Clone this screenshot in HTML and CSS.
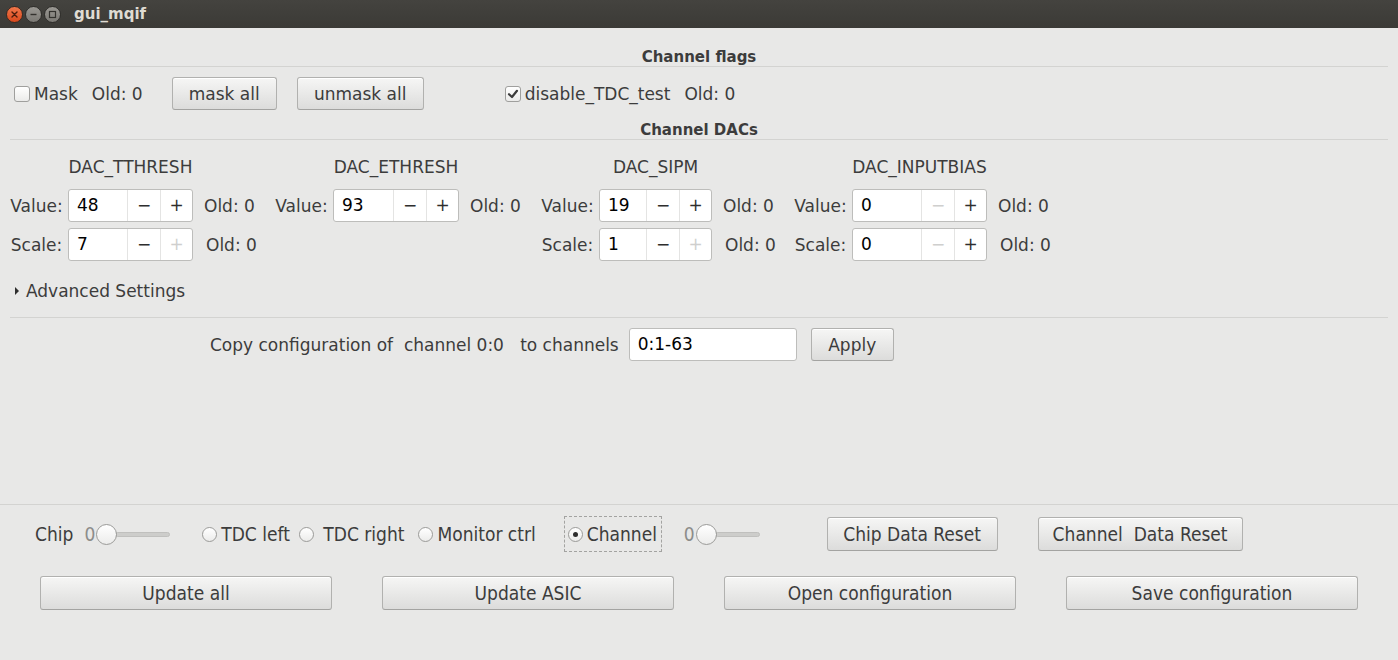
FILE: index.html
```html
<!DOCTYPE html>
<html>
<head>
<meta charset="utf-8">
<title>gui_mqif</title>
<link rel="stylesheet" href="styles.css">
</head>
<body>
<div class="titlebar">
  <div class="wbtns">
    <span class="wb close"><svg width="9" height="9" viewBox="0 0 9 9"><path d="M2 2L7 7M7 2L2 7" stroke="#4a1c0c" stroke-width="1.4" stroke-linecap="round"/></svg></span>
    <span class="wb"><svg width="9" height="9" viewBox="0 0 9 9"><path d="M1.5 4.5H7.5" stroke="#33322e" stroke-width="1.4"/></svg></span>
    <span class="wb"><svg width="9" height="9" viewBox="0 0 9 9"><rect x="1.5" y="1.5" width="6" height="6" fill="none" stroke="#33322e" stroke-width="1.2"/></svg></span>
  </div>
  <span class="wtitle">gui_mqif</span>
</div>

<div class="top">
  <div class="gtitle">Channel flags</div>
  <div class="flags">
    <span class="check"></span><span class="clabel">Mask</span><span class="old mask-old">Old: 0</span>
    <button class="btn b-mask">mask all</button>
    <button class="btn b-unmask">unmask all</button>
    <span class="check on"><svg width="14" height="14" viewBox="0 0 14 14"><path d="M3 7.2L6 10L11 3.8" fill="none" stroke="#3c3c3c" stroke-width="2.2" stroke-linecap="round" stroke-linejoin="round"/></svg></span><span class="clabel">disable_TDC_test</span><span class="old tdc-old">Old: 0</span>
  </div>
  <div class="gtitle">Channel DACs</div>

  <div class="dacs">
    <div class="dac c1">
      <div class="dhead">DAC_TTHRESH</div>
      <div class="dlabel">Value:</div>
      <div class="spin"><span class="sval">48</span><span class="sb">−</span><span class="sb">+</span></div>
      <div class="dold">Old: 0</div>
      <div class="dlabel">Scale:</div>
      <div class="spin"><span class="sval">7</span><span class="sb">−</span><span class="sb dis">+</span></div>
      <div class="dold s">Old: 0</div>
    </div>
    <div class="dac c2">
      <div class="dhead">DAC_ETHRESH</div>
      <div class="dlabel">Value:</div>
      <div class="spin"><span class="sval">93</span><span class="sb">−</span><span class="sb">+</span></div>
      <div class="dold">Old: 0</div>
    </div>
    <div class="dac c3">
      <div class="dhead">DAC_SIPM</div>
      <div class="dlabel">Value:</div>
      <div class="spin"><span class="sval">19</span><span class="sb">−</span><span class="sb">+</span></div>
      <div class="dold">Old: 0</div>
      <div class="dlabel">Scale:</div>
      <div class="spin"><span class="sval">1</span><span class="sb">−</span><span class="sb dis">+</span></div>
      <div class="dold s">Old: 0</div>
    </div>
    <div class="dac c4">
      <div class="dhead">DAC_INPUTBIAS</div>
      <div class="dlabel">Value:</div>
      <div class="spin"><span class="sval">0</span><span class="sb dis">−</span><span class="sb">+</span></div>
      <div class="dold">Old: 0</div>
      <div class="dlabel">Scale:</div>
      <div class="spin"><span class="sval">0</span><span class="sb dis">−</span><span class="sb">+</span></div>
      <div class="dold s">Old: 0</div>
    </div>
  </div>

  <div class="adv"><span class="tri"></span>Advanced Settings</div>
  <div class="sep"></div>

  <div class="copyrow">
    <span class="copylbl">Copy configuration of  channel 0:0   to channels</span>
    <span class="entry">0:1-63</span>
    <button class="btn b-apply">Apply</button>
  </div>
</div>

<div class="bottom">
  <div class="ctrlrow">
    <span class="chip">Chip</span>
    <span class="slider s1"><span class="sv">0</span><span class="knob"></span><span class="track"></span></span>
    <span class="radio r1"></span><span class="rlabel">TDC left</span>
    <span class="radio r2"></span><span class="rlabel"> TDC right</span>
    <span class="radio r3"></span><span class="rlabel">Monitor ctrl</span>
    <span class="focus"><span class="radio on"></span><span class="rlabel">Channel</span></span>
    <span class="slider s2"><span class="sv">0</span><span class="knob"></span><span class="track"></span></span>
    <button class="btn b-chipreset">Chip Data Reset</button>
    <button class="btn b-chreset">Channel  Data Reset</button>
  </div>
  <div class="actions">
    <button class="btn big">Update all</button>
    <button class="btn big">Update ASIC</button>
    <button class="btn big">Open configuration</button>
    <button class="btn big">Save configuration</button>
  </div>
</div>
</body>
</html>
```

FILE: styles.css
```css
* { box-sizing: border-box; }
html, body { margin: 0; padding: 0; }
body {
  width: 1398px;
  height: 660px;
  overflow: hidden;
  background: #e8e8e7;
  font-family: "DejaVu Sans", "Noto Sans", sans-serif;
  font-size: 17px;
  color: #3c3c3c;
}

/* title bar */
.titlebar {
  height: 28px;
  background: linear-gradient(#44433f, #3b3a36);
  display: flex;
  align-items: center;
  padding-left: 6px;
}
.wbtns { display: flex; gap: 2px; }
.wb {
  width: 17px;
  height: 17px;
  border-radius: 50%;
  display: inline-flex;
  align-items: center;
  justify-content: center;
  background: linear-gradient(#9a9893, #7b7974);
  border: 1px solid #2f2e2b;
}
.wb.close { background: linear-gradient(#f2774a, #d8481c); border-color: #3a2a22; }
.wtitle {
  margin-left: 13px;
  font-weight: bold;
  font-size: 15px;
  color: #dfdbd2;
}

/* top area */
.top { height: 476px; padding: 19px 10px 0; }
.gtitle {
  height: 20px;
  line-height: 19px;
  padding-top: 1px;
  text-align: center;
  font-weight: bold;
  font-size: 15px;
  border-bottom: 1px solid #d3d3d1;
}

.flags {
  height: 53px;
  padding: 10px 0;
  display: flex;
  align-items: center;
}
.flags > * { flex: none; }
.check {
  width: 16px;
  height: 16px;
  border: 1px solid #9f9f9d;
  border-radius: 3px;
  background: linear-gradient(#ffffff, #ebebea);
  display: inline-flex;
  align-items: center;
  justify-content: center;
  margin-left: 4px;
}
.check.on { margin-left: 81px; }
.clabel { margin-left: 4px; }
.mask-old { margin-left: 14px; }
.tdc-old { margin-left: 14px; }

.btn {
  height: 33px;
  padding: 0;
  font: inherit;
  color: #3c3c3c;
  border: 1px solid #b1b1af;
  border-bottom-color: #a3a3a1;
  border-radius: 3px;
  background: linear-gradient(#f6f6f5, #dcdcdb);
  box-shadow: inset 0 1px 0 #ffffff;
  white-space: pre;
}
.b-mask { width: 105px; margin-left: 29px; }
.b-unmask { width: 127px; margin-left: 20px; }

/* dacs */
.dacs {
  display: flex;
  gap: 20px;
  padding-top: 15px;
}
.dac {
  display: grid;
  grid-template-rows: 28px 33px 33px;
  row-gap: 6px;
  align-items: center;
}
.dac.c1 { grid-template-columns: 58px 125px 62px; }
.dac.c2 { grid-template-columns: 58px 126px 62px; }
.dac.c3 { grid-template-columns: 58px 113px 62px; }
.dac.c4 { grid-template-columns: 58px 135px 62px; }
.dhead {
  grid-column: 2;
  height: 24px;
  padding-top: 2px;
  align-self: start;
  text-align: center;
  white-space: nowrap;
  margin: 0 -10px;
}
.dlabel { grid-column: 1; padding-right: 5px; text-align: center; }
.spin { grid-column: 2; }
.dold { grid-column: 3; padding-left: 11px; white-space: nowrap; }
.dold.s { padding-left: 13px; }

.spin {
  height: 33px;
  display: flex;
  background: #ffffff;
  border: 1px solid #bdbdbb;
  border-radius: 3px;
}
.sval {
  flex: 1;
  padding-left: 8px;
  color: #000000;
  line-height: 31px;
}
.sb {
  width: 33px;
  flex: none;
  text-align: center;
  line-height: 31px;
  border-left: 1px solid #e4e4e3;
  color: #2e2e2e;
}
.sb:last-child { width: 32px; }
.sb.dis { color: #cfcfce; }

.adv {
  height: 30px;
  margin-top: 15px;
  display: flex;
  align-items: center;
  padding-left: 5px;
}
.tri {
  width: 0;
  height: 0;
  border-top: 4px solid transparent;
  border-bottom: 4px solid transparent;
  border-left: 4px solid #2e2e2e;
  margin-right: 7px;
}
.sep { height: 1px; background: #d3d3d1; margin-top: 11px; }

.copyrow {
  margin-top: 10px;
  height: 33px;
  display: flex;
  align-items: center;
  padding-left: 200px;
}
.copylbl { white-space: pre; }
.entry {
  width: 168px;
  height: 33px;
  margin-left: 10px;
  background: #ffffff;
  border: 1px solid #bdbdbb;
  border-radius: 3px;
  padding-left: 8px;
  line-height: 31px;
  color: #000;
}
.b-apply { width: 83px; height: 33px; margin-left: 14px; }

/* bottom */
.bottom {
  border-top: 1px solid #d3d3d1;
  font-family: "DejaVu Sans Condensed", "DejaVu Sans", sans-serif;
  font-size: 19px;
}
.ctrlrow {
  height: 46px;
  padding-top: 12px;
  padding-left: 35px;
  display: flex;
  align-items: center;
}
.ctrlrow > * { flex: none; }
.ctrlrow .btn { height: 34px; }
.slider { display: inline-flex; align-items: center; }
.sv { color: #8d8d8b; margin-right: 1px; }
.knob {
  width: 21px;
  height: 21px;
  border-radius: 50%;
  border: 1px solid #9b9b99;
  background: linear-gradient(#ffffff, #ececeb);
  position: relative;
  z-index: 1;
}
.track {
  width: 55px;
  height: 5px;
  margin-left: -2px;
  border-radius: 3px;
  background: #cdcdcb;
  border: 1px solid #c0c0be;
}
.s1 { margin-left: 11px; }
.s2 { margin-left: 22px; }
.s2 .track { width: 45px; }

.radio {
  width: 15px;
  height: 15px;
  border-radius: 50%;
  border: 1px solid #9b9b99;
  background: linear-gradient(#ffffff, #ececeb);
  display: inline-flex;
  align-items: center;
  justify-content: center;
}
.radio.on::after {
  content: "";
  width: 5px;
  height: 5px;
  border-radius: 50%;
  background: #2e2e2e;
}
.r1 { margin-left: 32px; }
.r2 { margin-left: 9px; }
.r3 { margin-left: 14px; }
.rlabel { margin-left: 4px; white-space: pre; }
.focus {
  display: inline-flex;
  align-items: center;
  height: 36px;
  width: 98px;
  padding-left: 3px;
  margin-left: 28px;
  border: 1px dashed #a3a3a1;
}
.focus .rlabel { margin-left: 4px; }
.b-chipreset { width: 171px; margin-left: 67px; }
.b-chreset { width: 205px; margin-left: 40px; }

.actions {
  display: flex;
  gap: 50px;
  padding-left: 40px;
  margin-top: 25px;
}
.btn.big { width: 292px; height: 34px; }
```
